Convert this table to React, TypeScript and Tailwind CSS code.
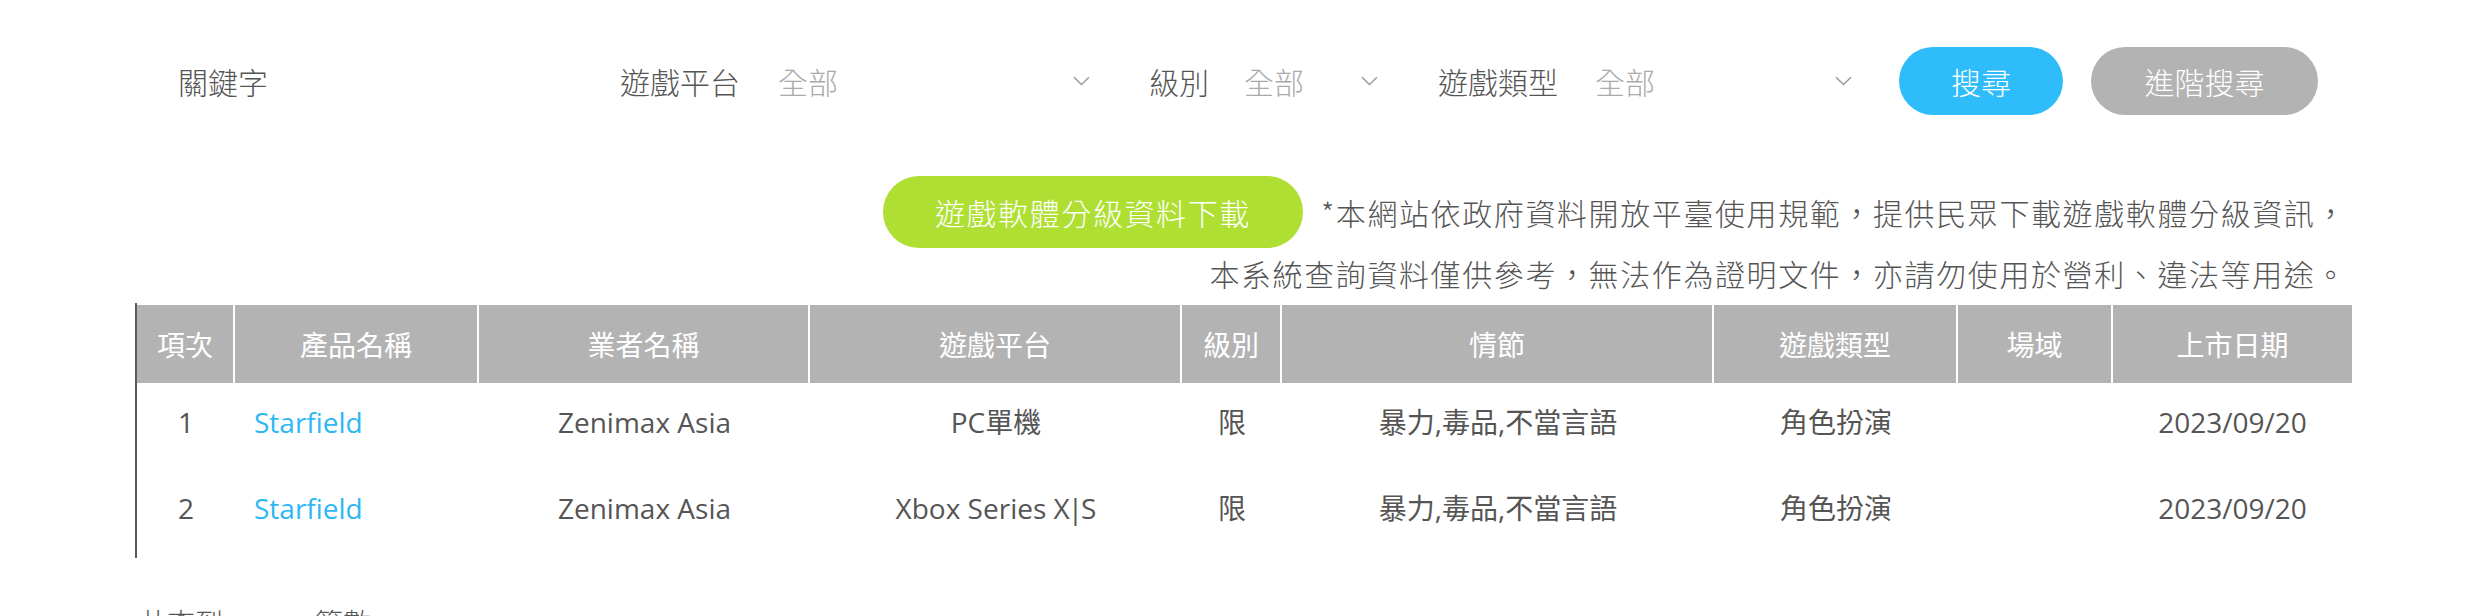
import React from "react";

const Chevron = () => (
  <svg width="17" height="10" viewBox="0 0 17 10" fill="none" className="shrink-0">
    <path d="M1 1.2 L8.5 8.5 L16 1.2" stroke="#9a9a9a" strokeWidth="1.5" />
  </svg>
);

const cols = [
  { w: "w-[98px]", label: "項次" },
  { w: "w-[244px]", label: "產品名稱" },
  { w: "w-[331px]", label: "業者名稱" },
  { w: "w-[372px]", label: "遊戲平台" },
  { w: "w-[100px]", label: "級別" },
  { w: "w-[432px]", label: "情節" },
  { w: "w-[244px]", label: "遊戲類型" },
  { w: "w-[155px]", label: "場域" },
  { w: "w-[239px]", label: "上市日期" },
];

const rows = [
  ["1", "Starfield", "Zenimax Asia", "PC單機", "限", "暴力,毒品,不當言語", "角色扮演", "", "2023/09/20"],
  ["2", "Starfield", "Zenimax Asia", "Xbox Series X|S", "限", "暴力,毒品,不當言語", "角色扮演", "", "2023/09/20"],
];

export default function App() {
  return (
    <div lang="zh-TW" className="w-full min-h-[616px] bg-white font-['Noto_Sans_CJK_TC',sans-serif] font-light">
      <div className="w-[2217px] mx-auto">
        {/* filter row */}
        <div className="flex items-center h-[68px] mt-[47px] pl-[43px] text-[30px] leading-none">
          <div className="w-[442px] text-[#555]">關鍵字</div>
          <div className="w-[120px] text-[#555]">遊戲平台</div>
          <div className="ml-[38px] w-[312px] flex items-center justify-between text-[#aaa]">
            <span>全部</span>
            <Chevron />
          </div>
          <div className="ml-[59px] w-[60px] text-[#555]">級別</div>
          <div className="ml-[35px] w-[134px] flex items-center justify-between text-[#aaa]">
            <span>全部</span>
            <Chevron />
          </div>
          <div className="ml-[60px] w-[120px] text-[#555]">遊戲類型</div>
          <div className="ml-[37px] w-[257px] flex items-center justify-between text-[#aaa]">
            <span>全部</span>
            <Chevron />
          </div>
          <button className="ml-[47px] w-[164px] h-[68px] rounded-full bg-[#2ebcfa] text-white text-[30px] leading-none flex items-center justify-center">
            搜尋
          </button>
          <button className="ml-[28px] w-[227px] h-[68px] rounded-full bg-[#b3b3b3] text-white text-[30px] leading-none flex items-center justify-center">
            進階搜尋
          </button>
        </div>

        {/* download + notice */}
        <div className="mt-[61px] pr-[5px] flex items-center justify-end text-[30px] tracking-[1.6px] text-[#555]">
          <button className="w-[420px] h-[72px] rounded-full bg-[#aedf32] text-white text-[30px] tracking-[1.6px] leading-none flex items-center justify-center">
            遊戲軟體分級資料下載
          </button>
          <div className="ml-[18px] leading-[45px]">
            *本網站依政府資料開放平臺使用規範，提供民眾下載遊戲軟體分級資訊，
          </div>
        </div>
        <div className="mt-[3px] pr-[5px] text-right text-[30px] tracking-[1.6px] leading-[45px] text-[#555]">
          本系統查詢資料僅供參考，無法作為證明文件，亦請勿使用於營利、違法等用途。
        </div>

        {/* table */}
        <div className="mt-[7px] border-l-2 border-[#5c5c5c] pt-[2px] pb-[3px]">
          <div className="flex h-[78px] bg-[#b3b3b3]">
            {cols.map((c, i) => (
              <div
                key={i}
                className={`${c.w} ${i < cols.length - 1 ? "border-r-2 border-white" : ""} flex items-center justify-center text-white text-[28px] font-normal leading-none`}
              >
                {c.label}
              </div>
            ))}
          </div>
          {rows.map((r, ri) => (
            <div key={ri} className="flex h-[86px] pb-[8px] text-[28px] leading-none text-[#555] font-['Open_Sans','Noto_Sans_CJK_TC',sans-serif] font-normal">
              {r.map((cell, ci) => (
                <div
                  key={ci}
                  className={`${cols[ci].w} flex items-center ${ci === 1 ? "justify-start pl-[19px] text-[#2db7f5]" : "justify-center"}`}
                >
                  {ci === 3 && cell.includes("|") ? (
                    <span>
                      Xbox Series X<span className="mx-[-2px]">|</span>S
                    </span>
                  ) : (
                    cell
                  )}
                </div>
              ))}
            </div>
          ))}
        </div>

        <div className="mt-[50px] pl-[4px] text-[28px] leading-none text-[#555] flex">
          <span>共查到</span>
          <span className="ml-[92px]">筆數</span>
        </div>
      </div>
    </div>
  );
}
